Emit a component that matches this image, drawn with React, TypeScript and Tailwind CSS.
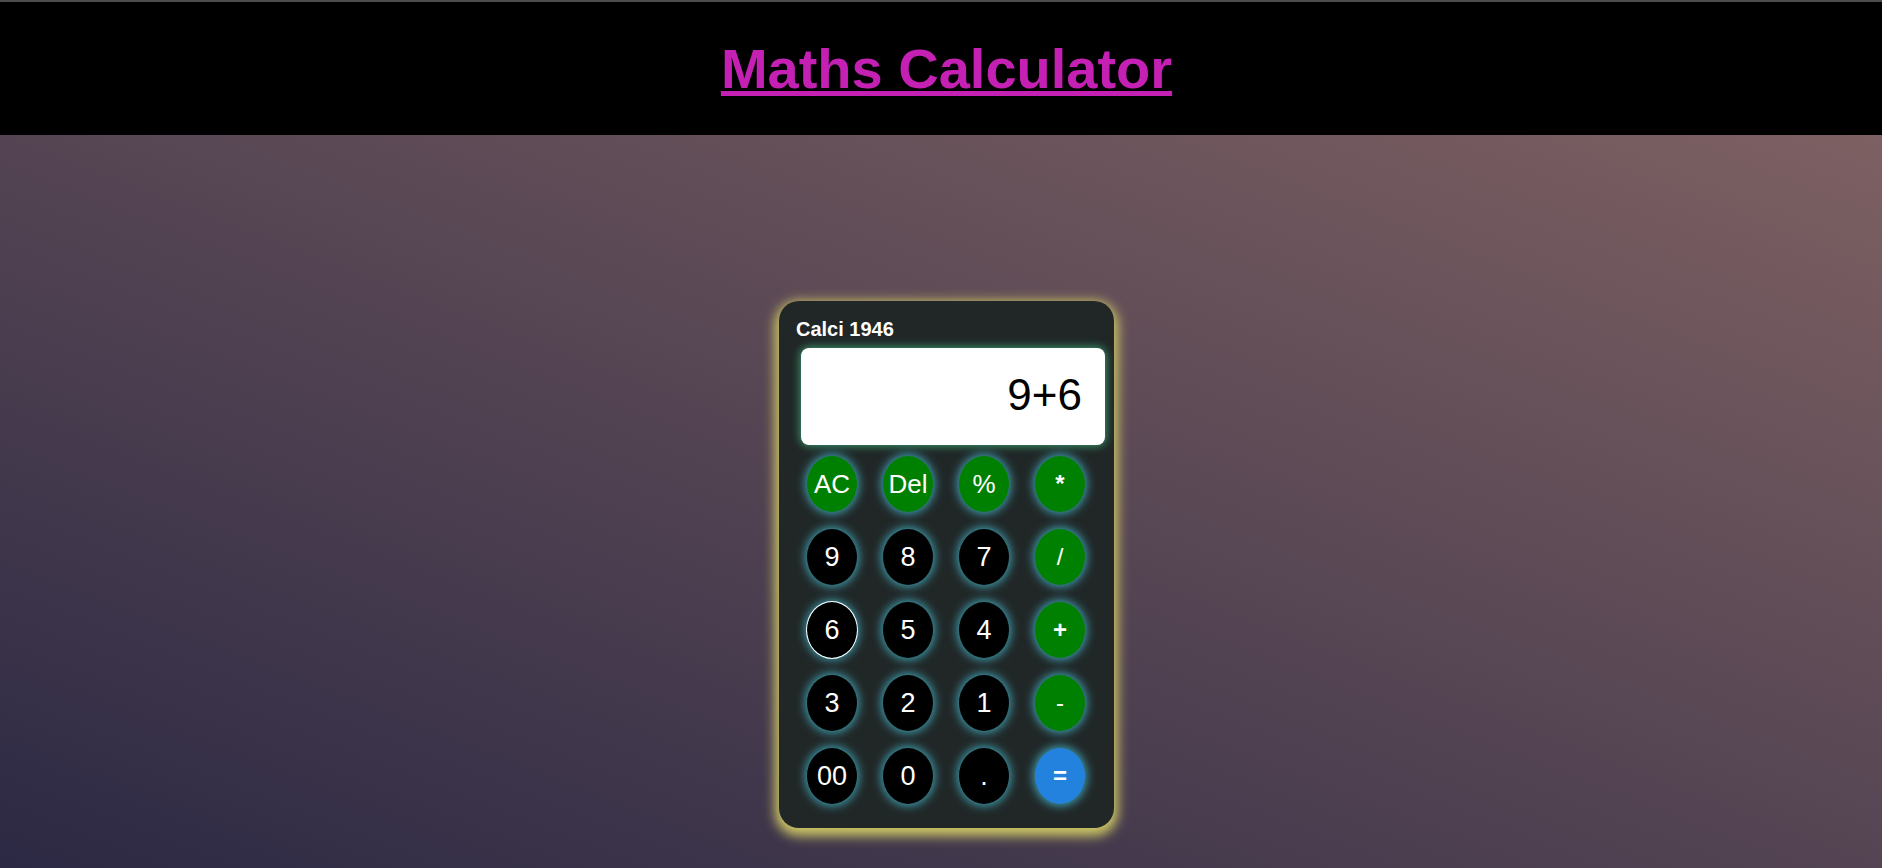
import React from "react";

type Key = { label: string; kind: "num" | "op" | "thin" | "fn" | "eq"; focus?: boolean };

const keys: Key[] = [
    { label: "AC", kind: "fn" },
    { label: "Del", kind: "fn" },
    { label: "%", kind: "fn" },
    { label: "*", kind: "op" },
    { label: "9", kind: "num" },
    { label: "8", kind: "num" },
    { label: "7", kind: "num" },
    { label: "/", kind: "thin" },
    { label: "6", kind: "num", focus: true },
    { label: "5", kind: "num" },
    { label: "4", kind: "num" },
    { label: "+", kind: "op" },
    { label: "3", kind: "num" },
    { label: "2", kind: "num" },
    { label: "1", kind: "num" },
    { label: "-", kind: "thin" },
    { label: "00", kind: "num" },
    { label: "0", kind: "num" },
    { label: ".", kind: "num" },
    { label: "=", kind: "eq" },
];

function keyClass(k: Key): string {
    const base = "w-[50px] h-[56px] rounded-[50%] text-white flex items-center justify-center leading-none shadow-[0_0_10px_2px_#3f9fb0]";
    if (k.kind === "num") return `${base} bg-black text-[27px]`;
    if (k.kind === "fn") return `${base} bg-[#008000] text-[26px]`;
    if (k.kind === "thin") return `${base} bg-[#008000] text-[24px]`;
    if (k.kind === "op") return `${base} bg-[#008000] text-[24px] font-bold`;
    return `${base} bg-[#2282dd] text-[24px] font-bold`;
}

export default function App(): React.JSX.Element {
    return (
        <div className="min-h-[868px] flex flex-col font-['Liberation_Sans',Arial,sans-serif]">
            <header className="h-[135px] bg-black border-t-2 border-[#4d4d4d] flex items-center justify-center pl-[11px]">
                <h1 className="text-[56px] font-bold text-[#c520b4] underline">Maths Calculator</h1>
            </header>

            <main className="flex-1 h-[733px] bg-[linear-gradient(to_top_right,#2c2944,#7d6062)] flex justify-center pl-[11px] pt-[166px]">
                <div className="w-[335px] h-[527px] rounded-[20px] bg-[#212727] pt-[17px] shadow-[0_4px_12px_4px_#cfc865]">
                    <p className="ml-[17px] text-[20px] leading-[23px] font-bold text-white">Calci 1946</p>

                    <div className="mt-[7px] ml-[22px] w-[304px] h-[97px] rounded-[8px] bg-white flex items-center justify-end pr-[23px] pb-[3px] shadow-[0_0_8px_1px_#3b9a6e]">
                        <span className="text-[44px] leading-none text-black">9+6</span>
                    </div>

                    <div className="mt-[11px] px-[28px] grid grid-cols-[repeat(4,50px)] gap-x-[26px] gap-y-[17px]">
                        {keys.map((k) => (
                            <button
                                key={k.label}
                                className={k.focus ? `${keyClass(k)} outline-[1.5px] outline-solid outline-white` : keyClass(k)}
                            >
                                {k.label}
                            </button>
                        ))}
                    </div>
                </div>
            </main>
        </div>
    );
}
